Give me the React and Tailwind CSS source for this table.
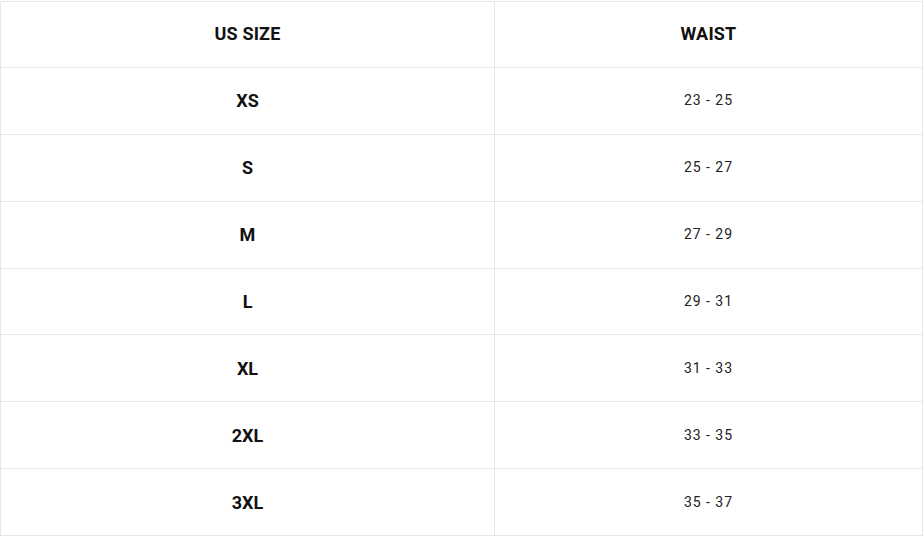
export default function App() {
  const rows = [
    ["XS", "23 - 25"],
    ["S", "25 - 27"],
    ["M", "27 - 29"],
    ["L", "29 - 31"],
    ["XL", "31 - 33"],
    ["2XL", "33 - 35"],
    ["3XL", "35 - 37"],
  ];
  return (
    <div className="w-[924px] h-[546px] bg-white pt-px" style={{ fontFamily: "Roboto, 'Noto Sans', sans-serif" }}>
      <div className="w-[923px] border-l border-t border-[#e6e6e6] text-[#111]">
        <div className="grid grid-cols-[494px_1fr] h-[66px]">
          <div className="flex items-center justify-center border-r border-b border-[#e6e6e6] text-[18px] font-bold tracking-[0.01em] pb-[3px]">US SIZE</div>
          <div className="flex items-center justify-center border-r border-b border-[#e6e6e6] text-[18px] font-bold tracking-[0.01em] pb-[3px]">WAIST</div>
        </div>
        {rows.map(([s, w]) => (
          <div key={s} className="grid grid-cols-[494px_1fr] h-[66.86px]">
            <div className="flex items-center justify-center border-r border-b border-[#e6e6e6] text-[18px] font-bold">{s}</div>
            <div className="flex items-center justify-center border-r border-b border-[#e6e6e6] text-[14px] tracking-[0.07em] text-[#222]">{w}</div>
          </div>
        ))}
      </div>
    </div>
  );
}
